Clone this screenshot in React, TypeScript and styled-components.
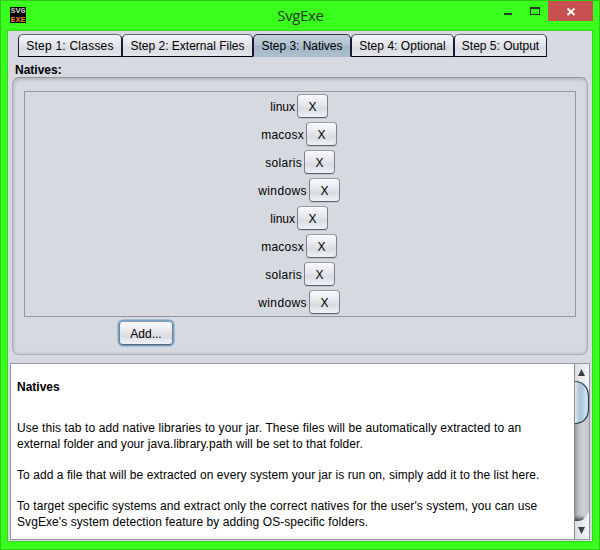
import React from "react";
import styled, { createGlobalStyle } from "styled-components";

const Global = createGlobalStyle`
  * { box-sizing: border-box; }
  body { margin: 0; overflow: hidden; font: 12px/16px "Liberation Sans", Arial, sans-serif; color: #000; }
`;

const Window = styled.div`
  width: 600px;
  height: 550px;
  display: flex;
  flex-direction: column;
  background: #38ff1b;
  border: 1px solid #2fc91a;
  padding: 0 6px 7px;
`;

const TitleBar = styled.header`
  position: relative;
  height: 29px;
  flex: none;
  display: flex;
  justify-content: space-between;
  align-items: flex-start;
`;

const Logo = styled.div`
  width: 16px;
  height: 16px;
  margin: 6px 0 0 3px;
  background: #000;
  overflow: hidden;
  svg { display: block; }
`;

const Title = styled.h1`
  position: absolute;
  inset: 0;
  margin: 0;
  text-align: center;
  font: 15px/29px "Open Sans", "Noto Sans", sans-serif;
  letter-spacing: -0.35px;
  color: #293a24;
  padding-left: 1px;
`;

const WindowButtons = styled.div`
  position: relative;
  display: flex;
`;

const WindowButton = styled.button<{ $w: number; $close?: boolean }>`
  width: ${(p) => p.$w}px;
  height: 20px;
  padding: 0;
  border: 0;
  display: block;
  background: ${(p) => (p.$close ? "#c75050" : "transparent")};
  svg { display: block; }
`;

const Client = styled.main`
  flex: 1;
  min-height: 0;
  border: 1px solid #34d81d;
  background: #d6d9df;
  padding: 3px 2px 1px;
  display: flex;
  flex-direction: column;
`;

const Tabs = styled.nav`
  display: flex;
  height: 23px;
  flex: none;
  margin-left: 8px;
`;

const Tab = styled.button<{ $w: number; $active?: boolean }>`
  width: ${(p) => p.$w}px;
  height: 23px;
  padding: 1px 0 0;
  border: 1px solid #1b1a30;
  border-top-color: ${(p) => (p.$active ? "#26384a" : "#63666c")};
  border-bottom-color: ${(p) => (p.$active ? "#a9bdce" : "#05000e")};
  border-radius: 5px 5px 0 0;
  background: ${(p) =>
    p.$active
      ? "linear-gradient(#c5d0db, #b4c4d2 45%, #a0b5c8 55%, #abbfce)"
      : "linear-gradient(#f4f5f7, #e2e4e9 50%, #d8dbe1 60%, #e2e5ea)"};
  font: inherit;
  color: #000;
  white-space: nowrap;
  display: flex;
  justify-content: center;
  align-items: center;
`;

const Fit = styled.span<{ $s?: number }>`
  letter-spacing: ${(p) => p.$s ?? 0}px;
`;

const GroupTitle = styled.h2`
  margin: 6px 0 -1px 5px;
  font: bold 12px/15px "Liberation Sans", Arial, sans-serif;
`;

const Group = styled.section`
  margin: 0 2px;
  height: 278px;
  flex: none;
  border: 1px solid #abaeb4;
  border-top-color: #94979d;
  border-radius: 7px;
  box-shadow: inset 1px 2px 3px #b5b8be, inset -1px -1px 2px #c3c6cc;
  padding: 13px 11px 12px;
`;

const NativeList = styled.ul`
  list-style: none;
  margin: 0;
  padding: 2px 2px 0 0;
  height: 226px;
  border: 1px solid #9297a1;
  display: flex;
  flex-direction: column;
  gap: 4px;
`;

const NativeRow = styled.li<{ $w: number }>`
  height: 24px;
  display: flex;
  align-items: center;
  margin: 0 auto;
  justify-content: flex-end;
  width: ${(p) => p.$w}px;
  gap: 2px;
  ${Fit} { padding-top: 2px; }
`;

const Button = styled.button<{ $w: number; $h: number; $focus?: boolean }>`
  width: ${(p) => p.$w}px;
  height: ${(p) => p.$h}px;
  flex: none;
  padding: 2px 0 0;
  border: 1px solid;
  border-color: #979aa0 #7d8086 #5e6166;
  border-radius: 4px;
  background: linear-gradient(#fafbfc, #e3e5e9 48%, #d8dbe0 62%, #f0f2f8);
  box-shadow: ${(p) => (p.$focus ? "0 0 0 1.5px #73a4d1" : "0 1px 0 #c4c7cd")};
  font: inherit;
  color: #000;
`;

const AddSlot = styled.div`
  padding: 4px 0 0 95px;
`;

const Help = styled.section`
  margin-top: 8px;
  height: 177px;
  flex: none;
  border: 1px solid #9297a1;
  background: #fff;
  display: flex;
`;

const HelpText = styled.article`
  flex: 1;
  padding: 15px 0 0 6px;
  white-space: nowrap;
`;

const HelpTitle = styled.h3`
  margin: 0 0 25px;
  font: bold 12px/16px "Liberation Sans", Arial, sans-serif;
`;

const Paragraph = styled.p`
  margin: 0 0 15px;
`;

const Line = styled.span<{ $s?: number }>`
  display: block;
  letter-spacing: ${(p) => p.$s ?? 0}px;
`;

const Scrollbar = styled.div`
  width: 15px;
  flex: none;
  svg { display: block; }
`;

const tabs = [
  { label: "Step 1: Classes", w: 104, s: 0.23 },
  { label: "Step 2: External Files", w: 131, s: 0 },
  { label: "Step 3: Natives", w: 98, s: -0.03 },
  { label: "Step 4: Optional", w: 103, s: 0.03 },
  { label: "Step 5: Output", w: 93, s: 0 },
];

const systems = [
  { name: "linux", w: 58, s: 0 },
  { name: "macosx", w: 76, s: 0.25 },
  { name: "solaris", w: 72, s: 0.3 },
  { name: "windows", w: 82, s: 0.4 },
];

const help = [
  [
    { t: "Use this tab to add native libraries to your jar. These files will be automatically extracted to an", s: 0.103 },
    { t: "external folder and your java.library.path will be set to that folder.", s: 0.055 },
  ],
  [{ t: "To add a file that will be extracted on every system your jar is run on, simply add it to the list here.", s: 0.06 }],
  [
    { t: "To target specific systems and extract only the correct natives for the user's system, you can use", s: 0.087 },
    { t: "SvgExe's system detection feature by adding OS-specific folders.", s: 0.075 },
  ],
];

function ScrollArt() {
  return (
    <svg width="15" height="175" viewBox="0 0 15 175">
      <defs>
        <linearGradient id="track">
          <stop offset="0" stopColor="#85878c" />
          <stop offset=".25" stopColor="#b9bbc1" />
          <stop offset=".6" stopColor="#cdd0d5" />
          <stop offset="1" stopColor="#c2c4ca" />
        </linearGradient>
        <linearGradient id="cap">
          <stop offset="0" stopColor="#dcdee2" />
          <stop offset=".6" stopColor="#e8eaed" />
          <stop offset="1" stopColor="#f4f5f6" />
        </linearGradient>
        <linearGradient id="thumb">
          <stop offset="0" stopColor="#f1f6fa" />
          <stop offset=".3" stopColor="#b4cbdd" />
          <stop offset=".5" stopColor="#adc6da" />
          <stop offset="1" stopColor="#dcedf8" />
        </linearGradient>
        <linearGradient id="shade" x2="0" y2="1">
          <stop offset="0" stopColor="#444" stopOpacity="0" />
          <stop offset="1" stopColor="#222" stopOpacity=".8" />
        </linearGradient>
      </defs>
      <rect width="15" height="175" fill="url(#track)" />
      <rect y="151" width="10" height="6" fill="url(#shade)" />
      <path d="M0 0H15V26Q10 17 0 17Z" fill="url(#cap)" />
      <path d="M0 175V157H4Q11 157 14 149H15V175Z" fill="url(#cap)" />
      <path d="M0 17.5H2Q14.5 19 14.5 34V44Q14.5 58 2 59.5H0" fill="url(#thumb)" stroke="#2b4256" strokeWidth="1.2" />
      <path d="M7.5 5L11 12H4Z M4 163H11L7.5 170Z" fill="#3c3d40" />
      <path d="M.5 0V175" stroke="#888b92" />
    </svg>
  );
}

export default function App() {
  return (
    <>
      <Global />
      <Window>
        <TitleBar>
          <Logo>
            <svg width="16" height="16" viewBox="0 0 16 16" fontFamily="Liberation Mono" fontSize="8" fontWeight="700">
              <text x="0.5" y="6" textLength="15" lengthAdjust="spacingAndGlyphs" fill="#ccc">SVG</text>
              <text x="0.5" y="15" textLength="15" lengthAdjust="spacingAndGlyphs" fill="#f08030">EXE</text>
            </svg>
          </Logo>
          <Title>SvgExe</Title>
          <WindowButtons>
            <WindowButton $w={26} aria-label="Minimize">
              <svg width="26" height="20"><path d="M9 12h8v2H9z" fill="#263a22" /></svg>
            </WindowButton>
            <WindowButton $w={27} aria-label="Maximize">
              <svg width="27" height="20"><path d="M9 6h10v8H9z M10 8v5h8V8z" fill="#263a22" fillRule="evenodd" /></svg>
            </WindowButton>
            <WindowButton $w={45} $close aria-label="Close">
              <svg width="45" height="20"><path d="M19.5 7.5l7 6.5M26.5 7.5l-7 6.5" stroke="#fff" strokeWidth="1.8" /></svg>
            </WindowButton>
          </WindowButtons>
        </TitleBar>
        <Client>
          <Tabs>
            {tabs.map((t, i) => (
              <Tab key={t.label} $w={t.w} $active={i === 2}><Fit $s={t.s}>{t.label}</Fit></Tab>
            ))}
          </Tabs>
          <GroupTitle>Natives:</GroupTitle>
          <Group>
            <NativeList>
              {[...systems, ...systems].map((n, i) => (
                <NativeRow key={i} $w={n.w}>
                  <Fit $s={n.s}>{n.name}</Fit>
                  <Button $w={31} $h={24}>X</Button>
                </NativeRow>
              ))}
            </NativeList>
            <AddSlot><Button $w={54} $h={24} $focus>Add...</Button></AddSlot>
          </Group>
          <Help>
            <HelpText>
              <HelpTitle>Natives</HelpTitle>
              {help.map((lines, i) => (
                <Paragraph key={i}>
                  {lines.map((l) => <Line key={l.t} $s={l.s}>{l.t}</Line>)}
                </Paragraph>
              ))}
            </HelpText>
            <Scrollbar><ScrollArt /></Scrollbar>
          </Help>
        </Client>
      </Window>
    </>
  );
}
